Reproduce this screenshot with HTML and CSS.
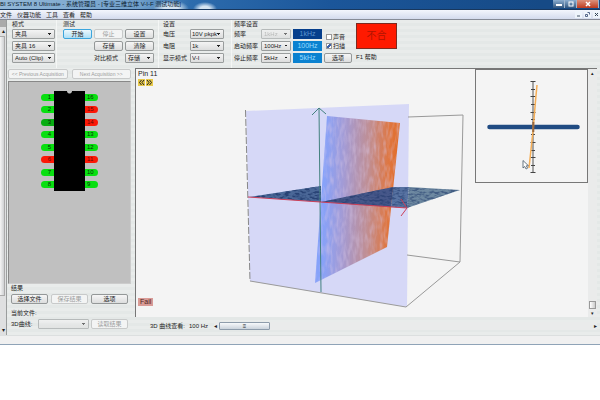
FILE: index.html
```html
<!DOCTYPE html>
<html lang="zh-CN">
<head>
<meta charset="utf-8">
<title>SYSTEM 8 Ultimate</title>
<link rel="stylesheet" href="styles.css">
</head>
<body>
<div class="window">
  <header class="titlebar">
    <h1 class="title">BI SYSTEM 8 Ultimate - 系统管理员 - [专业三维立体 V-I-F 测试功能]</h1>
    <div class="caption">
      <button class="cap" aria-label="最小化"><svg width="12" height="8"><path d="M3 5h6" stroke="#fff" stroke-width="2"/></svg></button>
      <button class="cap" aria-label="还原"><svg width="12" height="8"><rect x="4" y="2" width="4" height="4" fill="none" stroke="#fff"/></svg></button>
      <button class="cap cap-close" aria-label="关闭"><svg width="22" height="8"><path d="M9 2l4 4M13 2l-4 4" stroke="#fff" stroke-width="1.5"/></svg></button>
    </div>
  </header>
  <nav class="menubar">
    <a href="#">文件</a><a href="#">仪器功能</a><a href="#">工具</a><a href="#">查看</a><a href="#">帮助</a>
    <div class="mdi">
      <button aria-label="最小化子窗口"><svg width="7" height="7"><path d="M2 5h3" stroke="#456"/></svg></button>
      <button aria-label="还原子窗口"><svg width="7" height="7"><path d="M1.500 3.500h2v2h-2zM3.500 1.500h2v2" fill="none" stroke="#568"/></svg></button>
      <button aria-label="关闭子窗口"><svg width="7" height="7"><path d="M2 2l3 3M5 2l-3 3" stroke="#345"/></svg></button>
    </div>
  </nav>
  <main class="body">
    <aside class="gutter">
      <div class="gutter-cap"></div>
      <div class="gutter-arrow">▴</div>
      <div class="gutter-thumb"></div>
      <div class="gutter-arrow">▾</div>
    </aside>
    <div class="content">
      <div class="toolbar">
        <section class="group mode">
          <h2>模式</h2>
          <select aria-label="模式"><option>夹具</option></select>
          <select aria-label="夹具"><option>夹具 16</option></select>
          <select aria-label="夹具类型"><option>Auto (Clip)</option></select>
        </section>
        <section class="group test">
          <h2>测试</h2>
          <div class="test-grid">
            <button class="btn primary">开始</button>
            <button class="btn" disabled>停止</button>
            <button class="btn">设置</button>
            <button class="btn second">存储</button>
            <button class="btn">清除</button>
            <label class="second" for="compare">对比模式</label>
            <select id="compare"><option>存储</option></select>
          </div>
        </section>
        <section class="group settings">
          <h2>设置</h2>
          <div class="settings-grid">
            <label for="volt">电压</label><select id="volt"><option>10V pkpk</option></select>
            <label for="res">电阻</label><select id="res"><option>1k</option></select>
            <label for="disp">显示模式</label><select id="disp"><option>V-I</option></select>
          </div>
        </section>
        <section class="group freq">
          <h2>频率设置</h2>
          <div class="freq-grid">
            <label for="fq">频率</label><select id="fq" disabled><option>1kHz</option></select><output class="hz dark">1kHz</output>
            <label for="f1">启动频率</label><select id="f1"><option>100Hz</option></select><output class="hz">100Hz</output>
            <label for="f2">停止频率</label><select id="f2"><option>5kHz</option></select><output class="hz">5kHz</output>
          </div>
        </section>
        <section class="checks">
          <label><input type="checkbox">声音</label>
          <label><input type="checkbox" checked>扫描</label>
          <button class="btn">选项</button>
        </section>
        <section class="verdict">
          <div class="verdict-box">不合</div>
          <div>F1 帮助</div>
        </section>
      </div>
      <div class="work">
        <section class="side">
          <div class="acq">
            <button class="btn" disabled>&lt;&lt; Previous Acquisition</button>
            <button class="btn" disabled>Next Acquisition &gt;&gt;</button>
          </div>
          <div class="board">
            <div class="chip">
              <ol class="pins left">
                <li>1</li><li>2</li><li class="current">3</li><li>4</li><li>5</li><li class="bad">6</li><li>7</li><li>8</li>
              </ol>
              <div class="die"></div>
              <ol class="pins right">
                <li>16</li><li class="bad">15</li><li class="bad">14</li><li>13</li><li>12</li><li class="bad">11</li><li>10</li><li>9</li>
              </ol>
            </div>
          </div>
          <div class="results">
            <h2>结果</h2>
            <div class="result-buttons">
              <button class="btn">选择文件</button>
              <button class="btn" disabled>保存结果</button>
              <button class="btn">选项</button>
            </div>
            <div class="file">当前文件:</div>
            <div class="curve-row">
              <label for="curve">3D曲线:</label>
              <select id="curve" disabled><option></option></select>
              <button class="btn" disabled>读取结果</button>
            </div>
          </div>
        </section>
        <section class="viewer">
          <div class="stage">
            <div class="canvas">
              <svg class="scene" viewBox="136 69 452 247" preserveAspectRatio="xMinYMin meet">
                <defs>
                  <linearGradient id="heat" x1="0" y1="0" x2="1" y2="0.05">
                    <stop offset="0.12" stop-color="#86a2fa"/>
                    <stop offset="0.35" stop-color="#a39bd5"/>
                    <stop offset="0.65" stop-color="#c18e91"/>
                    <stop offset="0.88" stop-color="#df7640"/>
                    <stop offset="1" stop-color="#e26c26"/>
                  </linearGradient>
                  <filter id="streaks" x="0" y="0" width="1" height="1" color-interpolation-filters="sRGB">
                    <feTurbulence type="fractalNoise" baseFrequency="0.3 0.09" numOctaves="2" seed="4"/>
                    <feColorMatrix values="0 0 0 0 0.85  0 0 0 0 0.78  0 0 0 0 0.9  2 0 0 0 -0.8"/>
                    <feComposite in2="SourceGraphic" operator="in"/>
                  </filter>
                  <filter id="ripples" x="0" y="0" width="1" height="1" color-interpolation-filters="sRGB">
                    <feTurbulence type="fractalNoise" baseFrequency="0.2 0.5" numOctaves="2" seed="8"/>
                    <feColorMatrix values="0 0 0 0 0.1  0 0 0 0 0.2  0 0 0 0 0.4  4 0 0 0 -1.7"/>
                    <feComposite in2="SourceGraphic" operator="in"/>
                  </filter>
                </defs>
                <path d="M246 111L409 104L407 307L250 281Z" fill="#d6d8f7"/>
                <path d="M408 117L463 115L460 262L407 255M460 262L406 307L250 281" fill="none" stroke="#999" stroke-width="1"/>
                <path d="M245.500 110L250 281" stroke="#888" stroke-dasharray="7 2"/>
                <path d="M327 116L400 123L387 247L315 283Z" fill="url(#heat)"/>
                <path d="M327 116L400 123L387 247L315 283Z" filter="url(#streaks)" opacity=".5"/>
                <path d="M249 197L321 186V202Z" fill="#4a6797"/>
                <path d="M249 197L321 186V202Z" filter="url(#ripples)" opacity=".7"/>
                <path d="M321 202L393 187L391 207Z" fill="#465789"/>
                <path d="M393 187L409 187L407 208L391 207Z" fill="#5873a2"/>
                <path d="M409 187L460 190L407 208Z" fill="#6e89a1"/>
                <path d="M321 202L393 187L460 190L407 208Z" filter="url(#ripples)" opacity=".5"/>
                <path d="M319 108L321 292M312 115L319 108L326 114" fill="none" stroke="#43817f"/>
                <path d="M248 197L407 208M401 199L407 208L401 216" fill="none" stroke="#cc4058"/>
              </svg>
              <div class="pin-info">
                <div>Pin 11</div>
                <div class="steps">
                  <button aria-label="上一个"><svg width="7" height="7"><path d="M3.500 1L1.500 3.500l2 2.500M6 1L4 3.500L6 6" fill="none" stroke="#222"/></svg></button>
                  <button aria-label="下一个"><svg width="7" height="7"><path d="M1 1l2 2.500L1 6M3.500 1l2 2.500L3.500 6" fill="none" stroke="#222"/></svg></button>
                </div>
              </div>
              <div class="inset">
                <svg viewBox="475 69 111 112">
                  <path d="M532 80V172" stroke="#555"/>
                  <path d="M529.500 80.500h5M529.500 95.500h5M529.500 111.500h5M529.500 141.500h5M529.500 156.500h5M529.500 171.500h5M530 88.500h4M530 103.500h4M530 118.500h4M530 133.500h4M530 149.500h4M530 164.500h4" stroke="#444"/>
                  <path d="M488.500 126h88" stroke="#204b82" stroke-width="4.500" stroke-linecap="round"/>
                  <path d="M536 84L534.500 100L532 130L528 167" fill="none" stroke="#f5ad55" stroke-width="1.500"/>
                  <path d="M532.300 121v10" stroke="#9b6a40" stroke-width="2"/>
                  <path d="M522 159.500v7.500l1.700-1.500 1.400 2.500 1.500-.8-1.300-2.400h2.200Z" fill="#fff" stroke="#456" stroke-width=".8"/>
                </svg>
              </div>
              <div class="fail">Fail</div>
            </div>
            <div class="vscroll"><span>▴</span><span class="vthumb"></span><span>▾</span></div>
          </div>
          <div class="slider-row">
            <span class="slider-label">3D 曲线查看:</span><span>100 Hz</span>
            <div class="hscroll"><span>◂</span><span class="hthumb">≡</span><span class="end">▸</span></div>
          </div>
        </section>
      </div>
    </div>
  </main>
  <footer class="status"></footer>
</div>
</body>
</html>
```
FILE: styles.css
```css
* { box-sizing: border-box; }
body { margin: 0; background: #fff; }
.window {
  font: 6px/8px "Liberation Sans", "Noto Sans CJK SC", sans-serif;
  color: #222;
  background: #e7eae9;
  overflow: hidden;
}
h1, h2, ol { margin: 0; padding: 0; font: inherit; list-style: none; }
button, select, input { font: inherit; color: inherit; margin: 0; padding: 0; }
svg { display: block; }

.titlebar {
  display: flex;
  justify-content: space-between;
  height: 10px;
  border-bottom: 1px solid #18375d;
  background:
    radial-gradient(ellipse 18px 9px at 171px 9px, #d4e4f2 40%, transparent),
    radial-gradient(ellipse 12px 7px at 205px 9px, #d4e4f2 40%, transparent),
    linear-gradient(90deg, #93b8d8 0, #6f9fca 140px, #2d6cad 190px, #1b569a 330px, #164a86 90%);
}
.title { font-size: 6px; line-height: 9px; color: #0b1c30; white-space: nowrap; }
.caption { display: flex; margin-right: 1px; }
.cap { height: 8px; width: 12px; border: 0; background: linear-gradient(#8caed0, #31567f); border-right: 1px solid #9fb6cf; }
.cap-close { width: 22px; background: linear-gradient(#dc917c, #bd3a1e); }

.menubar {
  display: flex;
  align-items: center;
  gap: 5px;
  height: 10px;
  background: linear-gradient(#f3f6fc, #d4dbed);
  border-bottom: 1px solid #868b96;
}
.menubar a { color: #222; text-decoration: none; }
.mdi { display: flex; gap: 2px; margin-left: auto; }
.mdi button { width: 7px; height: 7px; border: 0; background: #eef4fb; }

.body { display: flex; }
.gutter {
  flex: none;
  width: 7px;
  display: flex;
  flex-direction: column;
  background: #dfe0e1;
  border-right: 1px solid #9a9d9d;
}
.gutter-cap { height: 7px; background: #aaa; }
.gutter-arrow { height: 9px; text-align: center; }
.gutter-thumb { flex: 1; margin: 0 1px 30px 0; background: linear-gradient(90deg, #f5f5f5, #cfd1d3); border: 1px solid #aaa; border-left: 0; }
.content { flex: 1; min-width: 0; background: repeating-linear-gradient(#e9eceb 0 3px, #e4e8e7 3px 6px); }

.toolbar { display: flex; height: 48px; padding-left: 2px; }
.group { border-right: 1px solid #f4f6f5; }
.group h2 { line-height: 9px; }
.mode { display: flex; flex-direction: column; gap: 2px; width: 48px; padding: 0 3px; }
.mode h2 { margin-bottom: -2px; }
.mode select { width: 43px; height: 10px; }
.test { width: 102px; padding: 0 0 0 6px; }
.test-grid { display: grid; grid-template-columns: repeat(3, 29px); gap: 2px; }
.second { grid-column-start: 2; }
label { white-space: nowrap; }
.test-grid label, .settings-grid label, .freq-grid label { line-height: 10px; }
.settings { width: 73px; padding-left: 4px; }
.settings-grid { display: grid; grid-template-columns: 25px 34px; gap: 2px; }
.settings-grid select { padding-right: 6px; padding-left: 1px; }
.freq { width: 92px; padding-left: 2px; border: 0; }
.freq-grid { display: grid; grid-template-columns: 25px 30px 29px; gap: 2px; }
.hz { background: #0b82d0; color: #9adcff; text-align: center; line-height: 10px; height: 10px; font-size: 7px; }
.hz.dark { background: #063f8c; color: #5d95cf; }
.checks { display: flex; flex-direction: column; width: 28px; gap: 1px; padding-top: 13px; }
.checks label { display: flex; align-items: center; gap: 1px; padding-left: 2px; }
.checks input { appearance: none; flex: none; width: 6px; height: 6px; border: 1px solid #999; background: #fff; }
.checks input:checked { background: linear-gradient(135deg, #fff 30%, #3f62a8 30% 70%, #fff 70%); }
.checks .btn { margin-top: 2px; }
.verdict { padding: 3px 0 0 4px; display: flex; flex-direction: column; gap: 4px; }
.verdict-box { width: 41px; height: 26px; background: #ff1a00; border: 1px solid #7c2a20; color: #b01400; font-size: 10px; line-height: 24px; text-align: center; }

.btn {
  height: 10px;
  line-height: 8px;
  border: 1px solid #949898;
  border-radius: 2px;
  background: linear-gradient(#f6f6f6, #dcdddd);
  text-align: center;
  white-space: nowrap;
}
.btn:disabled { color: #9b9d9d; background: #f3f4f4; border-color: #c8caca; }
.btn.primary { border-color: #3ca5dd; background: linear-gradient(#edf8fd, #addff6); }
select {
  appearance: none;
  height: 10px;
  min-width: 0;
  padding: 0 7px 0 2px;
  line-height: 8px;
  border: 1px solid #999d9d;
  border-radius: 1px;
  background-image:
    linear-gradient(-135deg, #222 50%, transparent 50%),
    linear-gradient(135deg, #222 50%, transparent 50%),
    linear-gradient(#f4f4f4, #dcdddd);
  background-size: 2px 2px, 2px 2px, 100% 100%;
  background-position: right 4px center, right 2px center, 0 0;
  background-repeat: no-repeat;
}
select:disabled { color: #999; opacity: .6; }

.work { display: flex; height: 267px; }
.side { flex: none; width: 128px; padding: 1px 4px 0 1px; display: flex; flex-direction: column; }
.acq { display: grid; grid-template-columns: 1fr 1fr; gap: 4px; }
.acq .btn { font-size: 5px; }
.board { margin-top: 2px; height: 203px; background: #c0c0c0; border: 1px solid #999; border-color: #888 #ccc #ccc #888; padding: 9px 0 0 32px; }
.chip { display: flex; height: 100px; }
.die { width: 31px; background: radial-gradient(circle at 50% 0, #c0c0c0 2px, #000 3px); }
.pins { width: 13px; display: grid; grid-template-rows: repeat(8, 1fr); align-items: center; color: #0c2c0a; }
.pins li { height: 7px; line-height: 7px; background: #08df10; text-align: right; padding-right: 3px; border-radius: 4px 0 0 4px; }
.pins.right li { text-align: left; padding: 0 0 0 2px; border-radius: 0 4px 4px 0; }
.pins .bad { background: #fb1706; color: #5c0c05; }
.pins .current { background: #07ad12; }
.results { padding: 1px 3px; display: flex; flex-direction: column; gap: 2px; }
.results h2 { line-height: 7px; }
.result-buttons { display: grid; grid-template-columns: repeat(3, 37px); gap: 3px; }
.file { margin-top: 3px; }
.curve-row { display: grid; grid-template-columns: 25px 51px 37px; gap: 2px; }
.curve-row label { line-height: 10px; }

.viewer { flex: 1; min-width: 0; padding-right: 3px; display: flex; flex-direction: column; }
.stage { display: flex; height: 249px; border-top: 1px solid #777; border-left: 1px solid #777; background: #f4f4f4; }
.canvas { position: relative; flex: 1; min-width: 0; }
.scene { width: 100%; }
.pin-info { position: absolute; left: 2px; top: 1px; font-size: 7px; }
.steps { display: flex; gap: 1px; margin-top: 1px; }
.steps button { width: 7px; height: 7px; border: 0; background: #e7c94a; }
.inset { position: absolute; right: 0; top: 0; width: 113px; height: 114px; border: 1px solid #777; background: #f4f4f4; }
.fail { position: absolute; left: 2px; bottom: 11px; padding: 0 2px; background: #d99b96; color: #4d1f1c; font-size: 7px; }
.vscroll { width: 9px; display: flex; flex-direction: column; align-items: center; background: #eaebeb; font-size: 5px; }
.vthumb { width: 7px; height: 8px; margin-top: auto; border: 1px solid #999; background: linear-gradient(90deg, #fff, #ccc); }
.slider-row { display: flex; align-items: center; gap: 4px; height: 18px; padding-left: 15px; }
.hscroll { flex: 1; display: flex; align-items: center; gap: 2px; margin-left: 2px; background: #eaebeb; }
.hthumb { width: 51px; height: 8px; line-height: 6px; text-align: center; border: 1px solid #8e9cab; background: linear-gradient(#f7f9fb, #cbd3dc); border-radius: 1px; }
.end { margin-left: auto; }
.status { height: 10px; background: #f0f0f0; border-top: 1px solid #dcdfdf; border-bottom: 1px solid #8fa3b7; }
```
